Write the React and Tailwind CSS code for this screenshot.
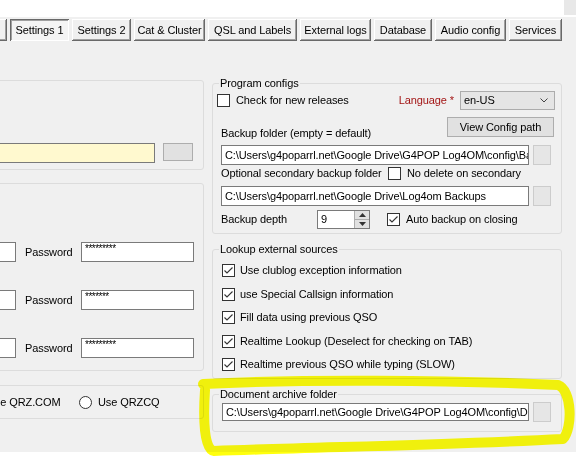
import React from 'react';

const Check = ({ checked }) => (
  <span className="w-[13px] h-[13px] shrink-0 border border-[#333333] bg-white flex items-center justify-center">
    {checked && (
      <svg width="11" height="11" viewBox="0 0 11 11">
        <path d="M1.5 5.5 L4 8 L9.5 2.5" fill="none" stroke="#333333" strokeWidth="1.1" />
      </svg>
    )}
  </span>
);

const Radio = () => (
  <span className="block w-[13px] h-[13px] shrink-0 rounded-full border border-[#333333] bg-white" />
);

const TextBox = ({ className = '', children }) => (
  <div className={`bg-white border border-[#7a7a7a] pl-[3px] flex items-center overflow-hidden whitespace-nowrap ${className}`}>
    {children}
  </div>
);

const Btn = ({ className = '', children }) => (
  <div className={`bg-[#e1e1e1] border border-[#adadad] flex items-center justify-center whitespace-nowrap ${className}`}>
    {children}
  </div>
);

const Group = ({ title, className = '', children }) => (
  <div className={`relative border border-[#dcdcdc] rounded-[3px] ${className}`}>
    {title && (
      <span className="absolute left-[6px] top-[-7px] bg-[#f0f0f0] px-[1px] leading-[13px] whitespace-nowrap">{title}</span>
    )}
    {children}
  </div>
);

const tabs = [
  ['', 20, false],
  ['Settings 1', 59, true],
  ['Settings 2', 59, false],
  ['Cat & Cluster', 71, false],
  ['QSL and Labels', 89, false],
  ['External logs', 71, false],
  ['Database', 58, false],
  ['Audio config', 71, false],
  ['Services', 53, false],
];

const lookups = [
  'Use clublog exception information',
  'use Special Callsign information',
  'Fill data using previous QSO',
  'Realtime Lookup (Deselect for checking on TAB)',
  'Realtime previous QSO while typing (SLOW)',
];

const backupPath = 'C:\\Users\\g4poparrl.net\\Google Drive\\G4POP Log4OM\\config\\Backups';
const docPath = 'C:\\Users\\g4poparrl.net\\Google Drive\\G4POP Log4OM\\config\\Documents';

export default function App() {
  return (
    <div className="relative w-[576px] h-[458px] bg-white overflow-hidden text-[11px] leading-[13px] tracking-[-0.1px] text-black font-['Liberation_Sans',Arial,sans-serif]">
      {/* top strip */}
      <div className="h-[17px] flex justify-end">
        <div className="w-[12px] h-[15px] bg-[#e8e8e8]" />
      </div>

      <div className="h-[435px] bg-[#f0f0f0]">
        {/* tab buttons */}
        <div className="flex gap-[3px] pt-[2px] -ml-[13px] h-[24px]">
          {tabs.map(([label, w, sel], i) => (
            <div
              key={i}
              style={{ width: w }}
              className={`h-[22px] shrink-0 flex items-center justify-center whitespace-nowrap ${
                sel
                  ? 'bg-[#f4f4f4] shadow-[inset_1px_1px_0_#696969,inset_-1px_-1px_0_#ffffff,inset_2px_2px_0_#a0a0a0]'
                  : 'bg-[#f0f0f0] shadow-[inset_-1px_-1px_0_#696969,inset_1px_1px_0_#ffffff,inset_-2px_-2px_0_#a0a0a0]'
              }`}
            >
              {label}
            </div>
          ))}
        </div>

        <div className="flex">
          {/* left column (cut off) */}
          <div className="w-[215px] -ml-[11px] shrink-0 pt-[39px]">
            <Group className="h-[90px] pt-[62px]">
              <div className="flex justify-end gap-[8px] pr-[10px]">
                <div className="w-[160px] h-[20px] bg-[#fff9cf] border border-[#7a7a7a]" />
                <Btn className="w-[30px] h-[18px]" />
              </div>
            </Group>

            <Group className="mt-[13px] h-[188px] pt-[58px] flex flex-col gap-[28px]">
              {['*********', '*******', '*********'].map((pw, i) => (
                <div key={i} className="flex items-center justify-end pr-[9px]">
                  <TextBox className="w-[26px] h-[20px]" />
                  <span className="ml-[9px] w-[56px]">Password</span>
                  <TextBox className="w-[113px] h-[20px] items-start pt-[1px] text-[10px] leading-[10px] tracking-[-0.5px]">{pw}</TextBox>
                </div>
              ))}
            </Group>

            <Group className="mt-[14px] h-[34px] flex items-center">
              <span className="-ml-[3px] w-[71px] whitespace-nowrap">Use QRZ.COM</span>
              <span className="ml-[21px]"><Radio /></span>
              <span className="ml-[6px]">Use QRZCQ</span>
            </Group>
          </div>

          {/* right column */}
          <div className="ml-[8px] w-[350px] shrink-0 pt-[42px]">
            <Group title="Program configs" className="h-[151px] pl-[8px] pr-[7px]">
              <div className="flex items-center justify-between h-[19px] mt-[7px] -ml-[4px] mr-[-1px]">
                <div className="flex items-center gap-[6px]">
                  <Check />
                  <span>Check for new releases</span>
                </div>
                <div className="flex items-center gap-[6px]">
                  <span className="text-[#a31515]">Language *</span>
                  <div className="w-[95px] h-[19px] bg-[#e5e5e5] border border-[#acacac] flex items-center justify-between pl-[3px] pr-[6px]">
                    <span>en-US</span>
                    <svg width="8" height="5" viewBox="0 0 8 5">
                      <path d="M0.5 0.5 L4 4 L7.5 0.5" fill="none" stroke="#444444" strokeWidth="1" />
                    </svg>
                  </div>
                </div>
              </div>

              <div className="flex items-start justify-between mt-[7px] h-[23px]">
                <span className="mt-[10px]">Backup folder (empty = default)</span>
                <Btn className="w-[107px] h-[20px]">View Config path</Btn>
              </div>

              <div className="flex items-center gap-[4px] mt-[5px]">
                <TextBox className="w-[308px] h-[20px]">{backupPath}</TextBox>
                <Btn className="w-[18px] h-[20px] bg-[#e6e6e6] border-[#cccccc]" />
              </div>

              <div className="flex items-center h-[14px] mt-[1px]">
                <span className="w-[167px] whitespace-nowrap">Optional secondary backup folder</span>
                <Check />
                <span className="ml-[6px]">No delete on secondary</span>
              </div>

              <div className="flex items-center gap-[4px] mt-[6px]">
                <TextBox className="w-[308px] h-[20px]">C:\Users\g4poparrl.net\Google Drive\Log4om Backups</TextBox>
                <Btn className="w-[18px] h-[20px] bg-[#e6e6e6] border-[#cccccc]" />
              </div>

              <div className="flex items-center mt-[4px] h-[19px]">
                <span className="w-[96px]">Backup depth</span>
                <div className="w-[53px] h-[19px] bg-white border border-[#7a7a7a] flex">
                  <span className="flex-1 pl-[3px] flex items-center">9</span>
                  <div className="w-[15px] flex flex-col border-l border-[#adadad]">
                    <div className="flex-1 bg-[#e1e1e1] border-b border-[#adadad] flex items-center justify-center">
                      <svg width="7" height="4" viewBox="0 0 7 4"><path d="M0 4 L3.5 0 L7 4 Z" fill="#333333" /></svg>
                    </div>
                    <div className="flex-1 bg-[#e1e1e1] flex items-center justify-center">
                      <svg width="7" height="4" viewBox="0 0 7 4"><path d="M0 0 L3.5 4 L7 0 Z" fill="#333333" /></svg>
                    </div>
                  </div>
                </div>
                <span className="ml-[17px]"><Check checked /></span>
                <span className="ml-[6px]">Auto backup on closing</span>
              </div>
            </Group>

            <Group title="Lookup external sources" className="mt-[15px] h-[130px] pt-[9px] pl-[9px]">
              {lookups.map((t) => (
                <div key={t} className="h-[23.5px] flex items-center gap-[5px]">
                  <Check checked />
                  <span>{t}</span>
                </div>
              ))}
            </Group>

            <Group title="Document archive folder" className="mt-[15px] h-[38px] pt-[7px] pl-[9px]">
              <div className="flex items-center gap-[4px]">
                <TextBox className="w-[307px] h-[18px]">{docPath}</TextBox>
                <Btn className="w-[18px] h-[20px] bg-[#e6e6e6] border-[#cccccc]" />
              </div>
            </Group>
          </div>
        </div>
      </div>

      {/* yellow highlighter stroke */}
      <svg className="absolute inset-0 pointer-events-none mix-blend-multiply" width="576" height="458" viewBox="0 0 576 458">
        <path
          d="M203 384 C300 379 450 380 558 385 C572 390 573 428 563 439 C450 445 320 447 214 451 C204 450 203 420 205 390"
          fill="none"
          stroke="#ffff00"
          strokeWidth="10"
          strokeLinecap="round"
          strokeLinejoin="round"
          opacity="0.95"
        />
      </svg>
    </div>
  );
}
